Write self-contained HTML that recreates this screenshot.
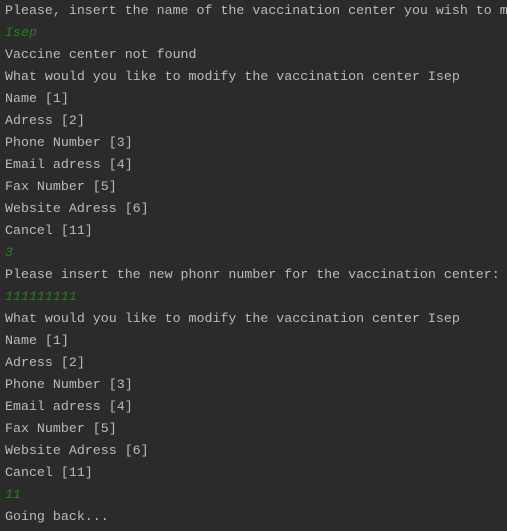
<!DOCTYPE html>
<html><head><meta charset="utf-8"><style>
html,body{margin:0;padding:0;background:#2b2b2b;width:507px;height:531px;overflow:hidden}
pre{margin:0;padding:0 0 0 5px;font-family:"Liberation Mono","DejaVu Sans Mono",monospace;font-size:13.3px;line-height:22px;color:#bbbbbb;white-space:pre;width:502px;overflow:hidden}
.g{color:#23801f;font-style:italic}
</style></head><body><pre>Please, insert the name of the vaccination center you wish to m
<span class="g">Isep</span>
Vaccine center not found
What would you like to modify the vaccination center Isep
Name [1]
Adress [2]
Phone Number [3]
Email adress [4]
Fax Number [5]
Website Adress [6]
Cancel [11]
<span class="g">3</span>
Please insert the new phonr number for the vaccination center:
<span class="g">111111111</span>
What would you like to modify the vaccination center Isep
Name [1]
Adress [2]
Phone Number [3]
Email adress [4]
Fax Number [5]
Website Adress [6]
Cancel [11]
<span class="g">11</span>
Going back...</pre></body></html>
